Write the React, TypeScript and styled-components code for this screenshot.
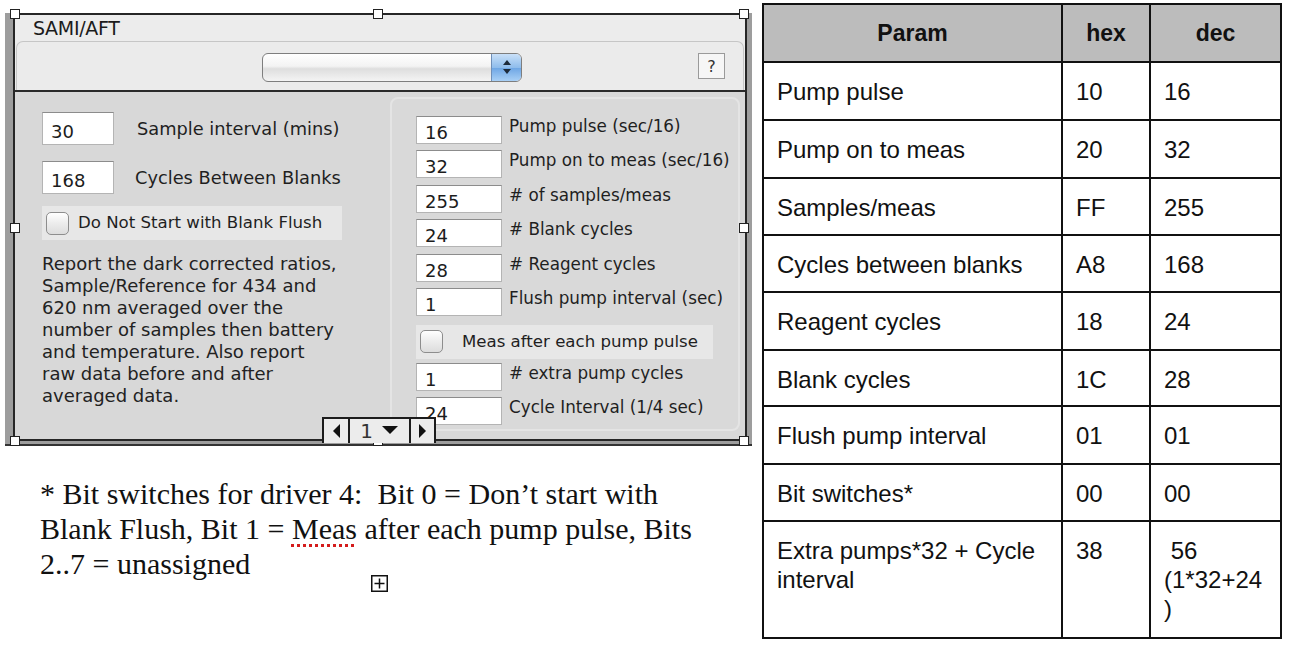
import React from "react";
import styled, { createGlobalStyle } from "styled-components";

const GlobalStyle = createGlobalStyle`
  body {
    margin: 0;
    background: #fff;
  }
`;

const Page = styled.div`
  width: 1290px;
  height: 658px;
  display: flex;
  align-items: flex-start;
  overflow: hidden;
  background: #fff;
`;

const LeftSide = styled.div`
  width: 762px;
  flex: none;
`;

// gray outer frame of the dialog screenshot
const Frame = styled.div`
  position: relative;
  margin: 13px 0 0 5px;
  width: 747px;
  box-sizing: border-box;
  background: #9d9d9d;
  padding: 0 5px 3px 8px;
  border-bottom: 2px solid #333;
  font-family: "DejaVu Sans", Verdana, sans-serif;
  color: #1f1f1f;
`;

const Win = styled.div`
  border: 2px solid #262626;
  background: #d8d8d8;
`;

const TitleBar = styled.div`
  height: 26px;
  line-height: 26px;
  background: #ececec;
  padding-left: 18px;
  font-size: 19px;
  letter-spacing: -0.3px;
  color: #1c1c1c;
`;

const ToolWrap = styled.div`
  background: #ececec;
  padding: 0 1px;
  border-bottom: 2px solid #2a2a2a;
`;

const Toolbar = styled.div`
  height: 48px;
  display: flex;
  align-items: center;
  padding: 0 18px 0 245px;
  background: #ebebeb;
  border: 1px solid #c6c6c6;
  border-bottom: none;
  border-radius: 7px 7px 0 0;
`;

const Select = styled.div`
  width: 260px;
  height: 29px;
  box-sizing: border-box;
  display: flex;
  justify-content: flex-end;
  border: 1px solid #7e7e7e;
  border-radius: 6px;
  background: linear-gradient(#ffffff, #f3f3f3 45%, #dedede 55%, #f4f4f4);
  overflow: hidden;
  margin-top: 2px;
`;

const Stepper = styled.div`
  width: 29px;
  display: flex;
  align-items: center;
  justify-content: center;
  background: linear-gradient(#c9e0f8, #8fbdec 50%, #6ea6e4 52%, #a9d0f6);
  border-left: 1px solid #6f8fb8;
`;

const HelpButton = styled.div`
  margin-left: auto;
  width: 27px;
  height: 26px;
  box-sizing: border-box;
  border: 1px solid #9a9a9a;
  background: #f6f6f6;
  display: flex;
  align-items: center;
  justify-content: center;
  font-size: 16px;
  color: #333;
`;

const Body = styled.div`
  height: 347px;
  box-sizing: border-box;
  display: flex;
  padding: 5px 5px 8px 0;
`;

const LeftCol = styled.div`
  width: 375px;
  flex: none;
  box-sizing: border-box;
  padding: 15px 0 0 27px;
`;

const GroupBox = styled.div`
  flex: 1;
  box-sizing: border-box;
  border: 2px solid #e4e4e4;
  border-radius: 8px;
  background: #d9d9d9;
  padding: 17px 0 0 24px;
`;

const FieldRow = styled.div<{ $h: number; $mb: number }>`
  display: flex;
  align-items: center;
  height: ${(p) => p.$h}px;
  margin-bottom: ${(p) => p.$mb}px;
`;

const TopRow = styled.div<{ $mb: number }>`
  display: flex;
  align-items: flex-start;
  height: 28px;
  margin-bottom: ${(p) => p.$mb}px;
`;

const TextBox = styled.input<{ $w: number; $h: number }>`
  width: ${(p) => p.$w}px;
  height: ${(p) => p.$h}px;
  box-sizing: border-box;
  flex: none;
  margin: 0;
  border: 1px solid #b4b4b4;
  border-top-color: #8c8c8c;
  background: #fff;
  padding: 5px 0 0 8px;
  font-family: "DejaVu Sans", Verdana, sans-serif;
  font-size: 18px;
  color: #1c1c1c;
  outline: none;
`;

const Label = styled.span<{ $ml: number; $size: number; $mt?: number }>`
  margin-left: ${(p) => p.$ml}px;
  margin-top: ${(p) => p.$mt ?? 0}px;
  font-size: ${(p) => p.$size}px;
  line-height: 22px;
  white-space: nowrap;
  color: #1f1f1f;
`;

const CheckRow = styled.div<{ $w: number; $h: number; $mt: number; $mb: number }>`
  display: flex;
  align-items: center;
  width: ${(p) => p.$w}px;
  height: ${(p) => p.$h}px;
  margin-top: ${(p) => p.$mt}px;
  margin-bottom: ${(p) => p.$mb}px;
  box-sizing: border-box;
  padding-left: 4px;
  background: #e7e7e7;
`;

const CheckBox = styled.span`
  width: 23px;
  height: 23px;
  flex: none;
  box-sizing: border-box;
  border: 1px solid #8d8d8d;
  border-radius: 5px;
  background: linear-gradient(#ffffff, #ececec 50%, #dcdcdc);
`;

const Para = styled.p`
  margin: 13px 0 0;
  font-size: 18px;
  line-height: 22px;
  white-space: nowrap;
  color: #222;
`;

const Handle = styled.span<{ $x: number; $y: number }>`
  position: absolute;
  left: ${(p) => p.$x}px;
  top: ${(p) => p.$y}px;
  width: 10px;
  height: 10px;
  box-sizing: border-box;
  transform: translate(-50%, -50%);
  border: 1.5px solid #222;
  background: #fff;
`;

const Pager = styled.div`
  position: absolute;
  left: 317px;
  top: 404px;
  height: 24px;
  display: flex;
  border: 2px solid #1c1c1c;
  border-bottom: none;
  background: #ececec;
`;

const PagerCell = styled.div<{ $w: number; $first?: boolean }>`
  width: ${(p) => p.$w}px;
  display: flex;
  align-items: center;
  justify-content: center;
  gap: 8px;
  border-left: ${(p) => (p.$first ? "none" : "2px solid #1c1c1c")};
  font-size: 20px;
  line-height: 24px;
  color: #333;
`;

const Note = styled.p`
  margin: 30px 0 0;
  padding-left: 40px;
  font-family: "Liberation Serif", "Times New Roman", serif;
  font-size: 30px;
  line-height: 35px;
  color: #111;
  white-space: nowrap;
`;

const Squiggle = styled.span`
  text-decoration: underline dotted #d41c1c;
  text-decoration-thickness: 3px;
  text-underline-offset: 5px;
`;

const PlusBox = styled.div`
  margin: -6px 0 0 371px;
  width: 17px;
  height: 17px;
`;

const Table = styled.table`
  margin-top: 3px;
  border-collapse: collapse;
  table-layout: fixed;
  font-family: "Liberation Sans", Arial, sans-serif;
  color: #111;
`;

const Row = styled.tr<{ $h: number }>`
  height: ${(p) => p.$h}px;
`;

const HeadCell = styled.th<{ $w: number }>`
  width: ${(p) => p.$w}px;
  background: #bcbcbc;
  border: 2px solid #111;
  font-size: 23px;
  font-weight: bold;
  text-align: center;
  vertical-align: middle;
  padding: 0;
`;

const Cell = styled.td`
  border: 2px solid #111;
  font-size: 24px;
  line-height: 29px;
  vertical-align: top;
  padding: 14px 4px 0 13px;
  white-space: nowrap;
`;

const leftRows = [
  { v: "16", l: "Pump pulse (sec/16)", mb: 6.4 },
  { v: "32", l: "Pump on to meas (sec/16)", mb: 6.4 },
  { v: "255", l: "# of samples/meas", mb: 6.4 },
  { v: "24", l: "# Blank cycles", mb: 6.4 },
  { v: "28", l: "# Reagent cycles", mb: 6.4 },
  { v: "1", l: "Flush pump interval (sec)", mb: 0 },
];

const tail = [
  { v: "1", l: "# extra pump cycles", mb: 6 },
  { v: "24", l: "Cycle Interval (1/4 sec)", mb: 0 },
];

const params: { p: React.ReactNode; h: string; d: React.ReactNode; rh: number }[] = [
  { p: "Pump pulse", h: "10", d: "16", rh: 58 },
  { p: "Pump on to meas", h: "20", d: "32", rh: 58 },
  { p: "Samples/meas", h: "FF", d: "255", rh: 57 },
  { p: "Cycles between blanks", h: "A8", d: "168", rh: 57 },
  { p: "Reagent cycles", h: "18", d: "24", rh: 58 },
  { p: "Blank cycles", h: "1C", d: "28", rh: 56 },
  { p: "Flush pump interval", h: "01", d: "01", rh: 58 },
  { p: "Bit switches*", h: "00", d: "00", rh: 57 },
  {
    p: (
      <>
        Extra pumps*32 + Cycle
        <br />
        interval
      </>
    ),
    h: "38",
    d: (
      <>
        &nbsp;56
        <br />
        (1*32+24
        <br />)
      </>
    ),
    rh: 117,
  },
];

const handles = [
  [10, 1],
  [373, 1],
  [739, 1],
  [10, 215],
  [739, 215],
  [10, 428],
  [373, 428],
  [739, 428],
];

function Tri({ dir }: { dir: "left" | "right" | "down" }) {
  const pts =
    dir === "left" ? "9,1 9,15 2,8" : dir === "right" ? "2,1 2,15 9,8" : "1,3 17,3 9,11";
  const w = dir === "down" ? 18 : 11;
  return (
    <svg width={w} height="16" viewBox={`0 0 ${w} 16`}>
      <polygon points={pts} fill="#111" />
    </svg>
  );
}

export default function App() {
  return (
    <Page>
      <GlobalStyle />
      <LeftSide>
        <Frame>
          <Win>
            <TitleBar>SAMI/AFT</TitleBar>
            <ToolWrap>
              <Toolbar>
                <Select>
                  <Stepper>
                    <svg width="10" height="16" viewBox="0 0 10 16">
                      <polygon points="5,1 9,6 1,6" fill="#1d2a3a" />
                      <polygon points="1,10 9,10 5,15" fill="#1d2a3a" />
                    </svg>
                  </Stepper>
                </Select>
                <HelpButton>?</HelpButton>
              </Toolbar>
            </ToolWrap>
            <Body>
              <LeftCol>
                <FieldRow $h={33} $mb={16}>
                  <TextBox $w={72} $h={33} readOnly value="30" />
                  <Label $ml={23} $size={17.8}>Sample interval (mins)</Label>
                </FieldRow>
                <FieldRow $h={33} $mb={12}>
                  <TextBox $w={72} $h={33} readOnly value="168" />
                  <Label $ml={21} $size={17.8}>Cycles Between Blanks</Label>
                </FieldRow>
                <CheckRow $w={300} $h={34} $mt={0} $mb={0}>
                  <CheckBox />
                  <Label $ml={9} $size={16.6}>Do Not Start with Blank Flush</Label>
                </CheckRow>
                <Para>
                  Report the dark corrected ratios,
                  <br />
                  Sample/Reference for 434 and
                  <br />
                  620 nm averaged over the
                  <br />
                  number of samples then battery
                  <br />
                  and temperature. Also report
                  <br />
                  raw data before and after
                  <br />
                  averaged data.
                </Para>
              </LeftCol>
              <GroupBox>
                {leftRows.map((r) => (
                  <TopRow key={r.l} $mb={r.mb}>
                    <TextBox $w={86} $h={28} readOnly value={r.v} />
                    <Label $ml={7} $mt={-1} $size={16.8}>
                      {r.l}
                    </Label>
                  </TopRow>
                ))}
                <CheckRow $w={297} $h={34} $mt={9} $mb={4}>
                  <CheckBox />
                  <Label $ml={19} $size={16.6}>Meas after each pump pulse</Label>
                </CheckRow>
                {tail.map((r) => (
                  <TopRow key={r.l} $mb={r.mb}>
                    <TextBox $w={86} $h={28} readOnly value={r.v} />
                    <Label $ml={7} $mt={-1} $size={16.8}>
                      {r.l}
                    </Label>
                  </TopRow>
                ))}
              </GroupBox>
            </Body>
          </Win>
          {handles.map(([x, y]) => (
            <Handle key={`${x}-${y}`} $x={x} $y={y} />
          ))}
          <Pager>
            <PagerCell $w={24} $first>
              <Tri dir="left" />
            </PagerCell>
            <PagerCell $w={59}>
              <span>1</span>
              <Tri dir="down" />
            </PagerCell>
            <PagerCell $w={23}>
              <Tri dir="right" />
            </PagerCell>
          </Pager>
        </Frame>
        <Note>
          * Bit switches for driver 4:&nbsp; Bit 0 = Don’t start with
          <br />
          Blank Flush, Bit 1 = <Squiggle>Meas</Squiggle> after each pump pulse, Bits
          <br />
          2..7 = unassigned
        </Note>
        <PlusBox>
          <svg width="17" height="17" viewBox="0 0 17 17">
            <rect x="0.75" y="0.75" width="15.5" height="15.5" fill="#fff" stroke="#111" strokeWidth="1.5" />
            <path d="M8.5 3.5v10M3.5 8.5h10" stroke="#111" strokeWidth="1.5" />
          </svg>
        </PlusBox>
      </LeftSide>
      <Table>
        <thead>
          <Row $h={58}>
            <HeadCell $w={297}>Param</HeadCell>
            <HeadCell $w={86}>hex</HeadCell>
            <HeadCell $w={129}>dec</HeadCell>
          </Row>
        </thead>
        <tbody>
          {params.map((r, i) => (
            <Row key={i} $h={r.rh}>
              <Cell>{r.p}</Cell>
              <Cell>{r.h}</Cell>
              <Cell>{r.d}</Cell>
            </Row>
          ))}
        </tbody>
      </Table>
    </Page>
  );
}
